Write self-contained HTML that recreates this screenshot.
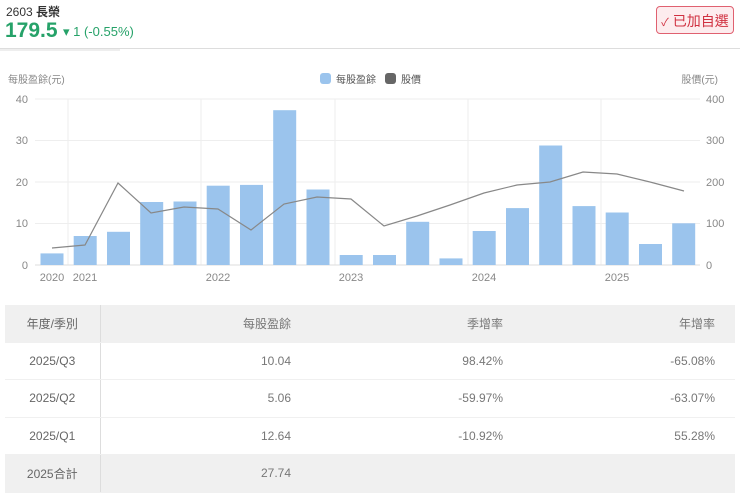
<!DOCTYPE html>
<html><head><meta charset="utf-8"><style>
body{margin:0;width:740px;height:491px;background:#fff;font-family:"Liberation Sans","Noto Sans CJK TC",sans-serif;position:relative;overflow:hidden}
.a{position:absolute}
table{position:absolute;left:5px;top:305px;width:730px;border-collapse:collapse;table-layout:fixed;font-size:12px;color:#777}
td{height:36.5px;padding:0;border-bottom:1px solid #f0f0f0}
td.r{text-align:right}
td.p{padding-right:20px}
tr.g td{background:#f0f0f0}
td.c{text-align:center;border-right:1px solid #ddd;color:#666}
</style></head><body>
<div class="a" style="left:6px;top:3px;font-size:12px;color:#333">2603 <b>長榮</b></div>
<div class="a" style="left:5px;top:19px;font-size:21px;font-weight:bold;color:#26a269">179.5</div>
<div class="a" style="left:63px;top:24px;font-size:13px;color:#26a269">▾ 1 (-0.55%)</div>
<div class="a" style="left:0;top:48px;width:740px;height:1px;background:#ddd"></div>
<div class="a" style="left:0;top:49px;width:120px;height:2px;background:#eee"></div>
<div class="a" style="left:656px;top:6px;width:78px;height:28px;border:1px solid #e06070;border-radius:4px;background:#fdecee;color:#d03040;font-size:14px;line-height:28px;text-align:center;box-sizing:border-box"><span style="font-size:11px">✓</span> 已加自選</div>
<svg class="a" style="left:0;top:60px" width="740" height="230" font-family="Liberation Sans,Noto Sans CJK TC,sans-serif" font-size="11" fill="#888">
<text x="8" y="23" font-size="10">每股盈餘(元)</text>
<text x="718" y="23" font-size="10" text-anchor="end">股價(元)</text>
<rect x="320" y="13" width="11" height="11" rx="3" fill="#9bc4ed"/><text x="336" y="23" font-size="10" fill="#555">每股盈餘</text>
<rect x="385" y="13" width="11" height="11" rx="3" fill="#666"/><text x="401" y="23" font-size="10" fill="#555">股價</text>
<g stroke="#eee"><line x1="35" x2="700" y1="39" y2="39"/><line x1="35" x2="700" y1="80.5" y2="80.5"/><line x1="35" x2="700" y1="122" y2="122"/><line x1="35" x2="700" y1="163.5" y2="163.5"/>
<line x1="68" x2="68" y1="39" y2="205"/><line x1="201" x2="201" y1="39" y2="205"/><line x1="335" x2="335" y1="39" y2="205"/><line x1="468" x2="468" y1="39" y2="205"/><line x1="601" x2="601" y1="39" y2="205"/></g>
<line x1="35" x2="700" y1="205" y2="205" stroke="#ddd"/>
<g text-anchor="end"><text x="28" y="43">40</text><text x="28" y="84">30</text><text x="28" y="126">20</text><text x="28" y="167">10</text><text x="28" y="209">0</text></g>
<g><text x="706" y="43">400</text><text x="706" y="84">300</text><text x="706" y="126">200</text><text x="706" y="167">100</text><text x="706" y="209">0</text></g>
<g text-anchor="middle"><text x="52" y="221">2020</text><text x="85" y="221">2021</text><text x="218" y="221">2022</text><text x="351" y="221">2023</text><text x="484" y="221">2024</text><text x="617" y="221">2025</text></g>
<g fill="#9bc4ed">
<rect x="40.5" y="193.4" width="23" height="11.6"/><rect x="73.7" y="176" width="23" height="29"/><rect x="107" y="171.8" width="23" height="33.2"/><rect x="140.2" y="142" width="23" height="63"/><rect x="173.5" y="141.5" width="23" height="63.5"/><rect x="206.7" y="125.7" width="23" height="79.3"/><rect x="240" y="124.9" width="23" height="80.1"/><rect x="273.2" y="50.2" width="23" height="154.8"/><rect x="306.5" y="129.5" width="23" height="75.5"/><rect x="339.7" y="195" width="23" height="10"/><rect x="373" y="195" width="23" height="10"/><rect x="406.2" y="161.8" width="23" height="43.2"/><rect x="439.5" y="198.4" width="23" height="6.6"/><rect x="472.7" y="171" width="23" height="34"/><rect x="506" y="148.1" width="23" height="56.9"/><rect x="539.2" y="85.5" width="23" height="119.5"/><rect x="572.5" y="146.1" width="23" height="58.9"/><rect x="605.7" y="152.5" width="23" height="52.5"/><rect x="639" y="184" width="23" height="21"/><rect x="672.2" y="163.3" width="23" height="41.7"/>
</g>
<polyline fill="none" stroke="#888" stroke-width="1.2" points="52,188 85,185 118,123 151,153 184,147 218,149 251,170 284,144 317,137 351,139 384,166 417,156 450,145 484,133 517,125 550,122 583,112 617,114 650,122 684,131"/>
</svg>
<table>
<colgroup><col style="width:95px"><col style="width:191px"><col style="width:212px"><col style="width:232px"></colgroup>
<tr class="g"><td class="c">年度/季別</td><td class="r">每股盈餘</td><td class="r">季增率</td><td class="r p">年增率</td></tr>
<tr><td class="c">2025/Q3</td><td class="r">10.04</td><td class="r">98.42%</td><td class="r p">-65.08%</td></tr>
<tr><td class="c">2025/Q2</td><td class="r">5.06</td><td class="r">-59.97%</td><td class="r p">-63.07%</td></tr>
<tr><td class="c">2025/Q1</td><td class="r">12.64</td><td class="r">-10.92%</td><td class="r p">55.28%</td></tr>
<tr class="g"><td class="c">2025合計</td><td class="r">27.74</td><td></td><td></td></tr>
</table>
</body></html>
